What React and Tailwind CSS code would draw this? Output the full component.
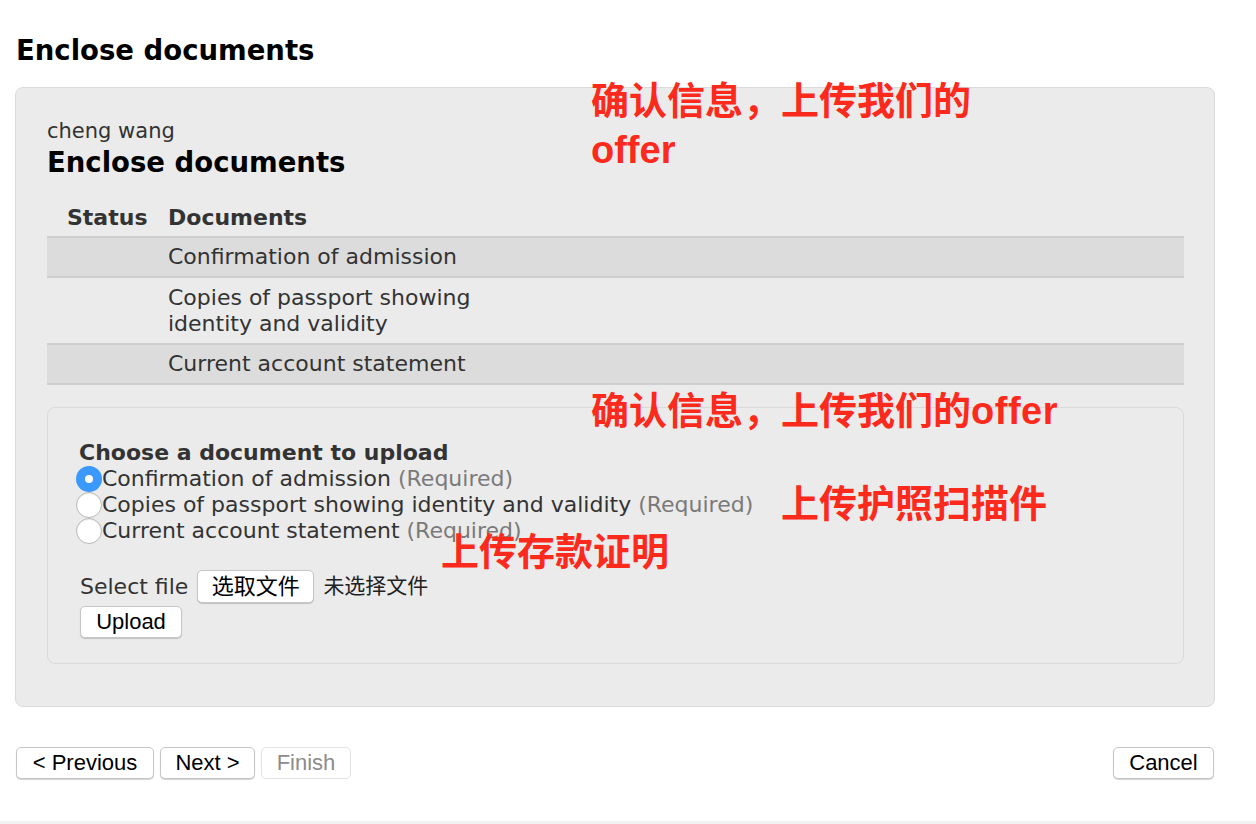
const docs = [
    { name: "Confirmation of admission", shaded: true },
    { name: "Copies of passport showing identity and validity", shaded: false },
    { name: "Current account statement", shaded: true },
];

const Radio = ({ checked }) => (
    checked ? (
        <span className="-ml-[4px] flex h-[26px] w-[26px] shrink-0 items-center justify-center rounded-full bg-[#3b99fc]">
            <span className="h-[8px] w-[8px] rounded-full bg-white" />
        </span>
    ) : (
        <span className="-ml-[4px] h-[26px] w-[26px] shrink-0 rounded-full border border-[#b9b9b9] bg-white shadow-[inset_0_1px_1px_rgba(0,0,0,0.08)]" />
    )
);

const Note = ({ className, children }) => (
    <div className={`absolute font-['Liberation_Sans','Noto_Sans_CJK_SC',sans-serif] text-[38px] font-bold leading-[49px] text-[#fc2a1c] ${className}`}>
        {children}
    </div>
);

const btn = "rounded-[5px] border border-[#c6c6c6] bg-white font-['Liberation_Sans','Noto_Sans_CJK_SC',sans-serif] text-[22px] leading-none text-black shadow-[0_1px_1px_rgba(0,0,0,0.18)]";

export default function App() {
    return (
        <div className="relative flex h-[824px] flex-col bg-white font-['DejaVu_Sans','Noto_Sans_CJK_SC',sans-serif] text-[#333]">
            <div className="pl-[15px]">
                <h1 className="pl-px pt-[32px] text-[27.5px] font-bold leading-[36px] text-black">Enclose documents</h1>

                {/* main panel */}
                <div className="mt-[19px] w-[1200px] rounded-[8px] border border-[#dadada] bg-[#ebebeb] pb-[42px] pl-[31px] pr-[30px] pt-[31px]">
                    <div className="text-[21px] leading-[24px]">cheng wang</div>
                    <h2 className="mt-[2px] text-[27.5px] font-bold leading-[34px] text-black">Enclose documents</h2>

                    <div className="mt-[21px]">
                        <div className="grid grid-cols-[121px_1fr] py-[5px] text-[22px] font-bold leading-[26px]">
                            <div className="pl-5">Status</div>
                            <div>Documents</div>
                        </div>
                        {docs.map((d) => (
                            <div
                                key={d.name}
                                className={`grid grid-cols-[121px_1fr] text-[22px] leading-[26px] ${d.shaded ? "border-y-2 border-[#cfcfcf] bg-[#dcdcdc] py-[6px]" : "pb-[6px] pt-[7px]"}`}
                            >
                                <div />
                                <div className="w-[330px]">{d.name}</div>
                            </div>
                        ))}
                    </div>

                    {/* upload box */}
                    <div className="mt-[22px] rounded-[8px] border border-[#dadada] pb-[25px] pl-[32px] pt-[32px]">
                        <div className="-ml-px text-[22px] font-bold leading-[26px]">Choose a document to upload</div>
                        {docs.map((d, i) => (
                            <label key={d.name} className="flex items-center text-[22px] leading-[26px]">
                                <Radio checked={i === 0} />
                                <span>
                                    {d.name} <span className="text-[#7a7a7a]">(Required)</span>
                                </span>
                            </label>
                        ))}

                        <div className="mt-[26px] flex items-center gap-[9px] text-[22px]">
                            <span>Select file</span>
                            <button className={`${btn} h-[33px] w-[117px] text-[21px]`}>选取文件</button>
                            <span className="text-[21px] text-[#222]">未选择文件</span>
                        </div>
                        <button className={`${btn} mt-[3px] h-[32px] w-[102px]`}>Upload</button>
                    </div>
                </div>

                {/* wizard buttons */}
                <div className="mt-[40px] flex w-[1199px] items-center justify-between">
                    <div className="flex gap-[6px] pl-px">
                        <button className={`${btn} h-[32px] w-[138px]`}>&lt; Previous</button>
                        <button className={`${btn} h-[32px] w-[95px]`}>Next &gt;</button>
                        <button disabled className="h-[32px] w-[90px] rounded-[5px] border border-[#e2e2e2] bg-white font-['Liberation_Sans',sans-serif] text-[22px] leading-none text-[#8c8c8c]">Finish</button>
                    </div>
                    <button className={`${btn} h-[32px] w-[101px]`}>Cancel</button>
                </div>
            </div>

            <div className="mt-auto h-[3px] bg-[#f2f2f2]" />

            {/* red annotations */}
            <Note className="left-[591px] top-[77px]">
                确认信息，上传我们的
                <br />
                offer
            </Note>
            <Note className="left-[591px] top-[387px]">
                确认信息，上传我们的<span className="tracking-[0.5px]">offer</span>
            </Note>
            <Note className="left-[781px] top-[480px]">上传护照扫描件</Note>
            <Note className="left-[441px] top-[528px]">上传存款证明</Note>
        </div>
    );
}
